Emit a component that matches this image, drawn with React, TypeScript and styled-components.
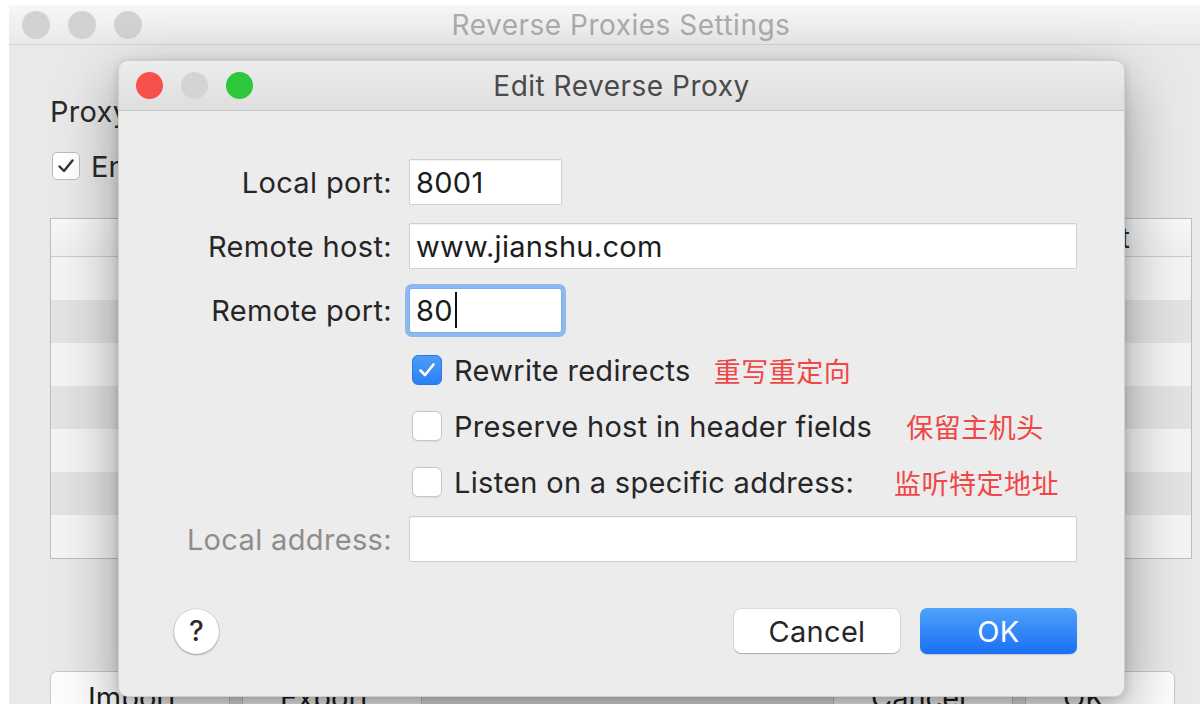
import React from "react";
import styled, { createGlobalStyle } from "styled-components";

const GlobalStyle = createGlobalStyle`
  html, body { margin: 0; padding: 0; width: 1200px; height: 704px; overflow: hidden; background: #fff; }
  body { font-family: Inter, "Noto Sans", "Liberation Sans", sans-serif; -webkit-font-smoothing: antialiased; }
  * { box-sizing: border-box; }
`;

const Screen = styled.div`
  position: relative;
  width: 1200px;
  height: 704px;
  overflow: hidden;
  background: #fff;
  padding: 5px 0 0 9px;
`;

const BackWindow = styled.div`
  width: 1224px;
  height: 760px;
  background: #e9e9e9;
  display: flex;
  flex-direction: column;
`;

const TitleBar = styled.div<{ $h: number; $pl: number; $dim?: boolean }>`
  flex: none;
  height: ${(p) => p.$h}px;
  display: grid;
  grid-template-columns: 1fr auto 1fr;
  align-items: center;
  padding: 0 ${(p) => p.$pl}px;
  background: ${(p) => (p.$dim ? "linear-gradient(#f6f6f6, #e9e9e9)" : "linear-gradient(#ededed, #dedede)")};
  border-bottom: 1px solid ${(p) => (p.$dim ? "#d4d4d4" : "#c8c8c8")};
`;

const Lights = styled.div`
  display: flex;
  gap: 18px;
`;

const Light = styled.span<{ $c: string; $size: number }>`
  width: ${(p) => p.$size}px;
  height: ${(p) => p.$size}px;
  border-radius: 50%;
  background: ${(p) => p.$c};
`;

const WinTitle = styled.div<{ $dim?: boolean }>`
  font-size: 28px;
  letter-spacing: 0.5px;
  color: ${(p) => (p.$dim ? "#ababab" : "#4a4a4a")};
  white-space: nowrap;
`;

const BackBody = styled.div`
  flex: 1;
  display: flex;
  flex-direction: column;
  padding: 50px 41px 0;
`;

const BackText = styled.div`
  font-size: 29px;
  letter-spacing: 0.3px;
  line-height: 34px;
  color: #2a2a2a;
  white-space: nowrap;
`;

const BackCheckRow = styled.div`
  margin-top: 20px;
  height: 34px;
  display: flex;
  align-items: center;
  gap: 11px;
  padding-left: 2px;
  font-size: 29px;
  color: #2a2a2a;
`;

const PlainBox = styled.span`
  width: 28px;
  height: 28px;
  border-radius: 5px;
  background: #fff;
  border: 1px solid #bcbcbc;
  display: flex;
  align-items: center;
  justify-content: center;
`;

const Table = styled.div`
  margin-top: 35px;
  border: 1px solid #bdbdbd;
  background: #f4f4f4;
  display: flex;
  flex-direction: column;
`;

const TableHead = styled.div`
  height: 38px;
  display: grid;
  grid-template-columns: 380px 1fr 200px;
  align-items: center;
  background: linear-gradient(#f8f8f8, #efefef);
  border-bottom: 1px solid #cbcbcb;
  font-size: 28px;
  color: #2a2a2a;
  padding: 0 24px 0 90px;
`;

const TableRow = styled.div<{ $odd: boolean }>`
  height: 43px;
  background: ${(p) => (p.$odd ? "#e3e3e3" : "#f4f4f4")};
`;

const BackButtons = styled.div`
  margin-top: 112px;
  display: flex;
  gap: 12px;
  padding-right: 17px;
`;

const BackButton = styled.div<{ $w: number }>`
  width: ${(p) => p.$w}px;
  height: 44px;
  background: #fdfdfd;
  border: 1px solid #c8c8c8;
  border-radius: 7px;
  font-size: 29px;
  color: #1e1e1e;
  padding: 8px 0 0 37px;
`;

const Spacer = styled.div`
  flex: 1;
`;

const Dialog = styled.div`
  position: absolute;
  left: 118px;
  top: 60px;
  width: 1007px;
  height: 637px;
  border-radius: 10px;
  overflow: hidden;
  background: #ececec;
  border: 1px solid rgba(0, 0, 0, 0.12);
  box-shadow: 0 22px 60px rgba(0, 0, 0, 0.36), 0 2px 10px rgba(0, 0, 0, 0.16);
  display: flex;
  flex-direction: column;
`;

const DialogBody = styled.div`
  flex: 1;
  display: flex;
  flex-direction: column;
  padding: 39px 47px 0 0;
`;

const FormGrid = styled.div`
  display: grid;
  grid-template-columns: 273px 1fr;
  grid-template-rows: 64px 64px 64px 56px 56px 56px 58px;
  column-gap: 17px;
  align-items: center;
`;

const Label = styled.div<{ $muted?: boolean }>`
  text-align: right;
  font-size: 29px;
  letter-spacing: 0.35px;
  color: ${(p) => (p.$muted ? "#8d8d8d" : "#262626")};
  white-space: nowrap;
`;

const Field = styled.div<{ $w?: number; $focus?: boolean }>`
  width: ${(p) => (p.$w ? `${p.$w}px` : "100%")};
  height: ${(p) => (p.$focus ? 45 : 46)}px;
  background: #fff;
  border: 1px solid ${(p) => (p.$focus ? "#79aef0" : "#d0d0d0")};
  border-radius: ${(p) => (p.$focus ? 3 : 1)}px;
  box-shadow: ${(p) => (p.$focus ? "0 0 0 4px rgba(110, 168, 238, 0.75)" : "inset 0 1px 0 rgba(0,0,0,0.05)")};
  display: flex;
  align-items: center;
  padding-left: 6px;
  font-size: 29px;
  letter-spacing: 0.3px;
  color: #1c1c1c;
`;

const Caret = styled.span`
  width: 2px;
  height: 36px;
  background: #111;
  margin-left: 2px;
`;

const CheckRow = styled.div`
  grid-column: 2;
  display: flex;
  align-items: center;
  padding-left: 3px;
  font-size: 29px;
  letter-spacing: 0.3px;
  color: #262626;
  white-space: nowrap;
`;

const Box = styled.span<{ $on?: boolean }>`
  flex: none;
  width: 30px;
  height: 30px;
  border-radius: 6px;
  display: flex;
  align-items: center;
  justify-content: center;
  background: ${(p) => (p.$on ? "linear-gradient(#4d9cfa, #2a7ff4)" : "#fff")};
  border: 1px solid ${(p) => (p.$on ? "#2a78e6" : "#c6c6c6")};
  box-shadow: ${(p) => (p.$on ? "none" : "0 1px 1px rgba(0,0,0,0.06)")};
`;

const CheckText = styled.span`
  margin-left: 12px;
`;

const Note = styled.span<{ $gap: number }>`
  margin-left: ${(p) => p.$gap}px;
  font-family: "Noto Sans CJK SC", "Noto Sans CJK JP", sans-serif;
  font-size: 27px;
  letter-spacing: 0.5px;
  color: #ef4646;
`;

const Footer = styled.div`
  margin-top: 40px;
  display: flex;
  align-items: center;
  gap: 20px;
  padding-left: 55px;
`;

const HelpButton = styled.div`
  width: 45px;
  height: 45px;
  border-radius: 50%;
  background: #fff;
  box-shadow: 0 1px 2px rgba(0, 0, 0, 0.3), 0 0 0 0.5px rgba(0, 0, 0, 0.15);
  display: flex;
  align-items: center;
  justify-content: center;
  font-size: 28px;
  font-weight: 500;
  color: #2b2b2b;
`;

const Button = styled.div<{ $primary?: boolean; $w: number }>`
  width: ${(p) => p.$w}px;
  height: ${(p) => (p.$primary ? 46 : 44)}px;
  border-radius: 7px;
  display: flex;
  align-items: center;
  justify-content: center;
  font-size: 29px;
  letter-spacing: 0.3px;
  color: ${(p) => (p.$primary ? "#fff" : "#262626")};
  background: ${(p) => (p.$primary ? "linear-gradient(#4fa2fb, #1a6ff4)" : "#fff")};
  box-shadow: ${(p) =>
    p.$primary ? "0 1px 1px rgba(0,0,0,0.15)" : "0 1px 1px rgba(0,0,0,0.2), 0 0 0 0.5px rgba(0,0,0,0.15)"};
`;

const Tick = ({ color, w }: { color: string; w: number }) => (
  <svg width="22" height="22" viewBox="0 0 22 22" fill="none">
    <path d="M4.5 11.5 L9 16 L17.5 5.5" stroke={color} strokeWidth={w} strokeLinecap="round" strokeLinejoin="round" />
  </svg>
);

export default function App() {
  const rows = Array.from({ length: 7 }, (_, i) => i);
  return (
    <Screen>
      <GlobalStyle />
      <BackWindow>
        <TitleBar $h={40} $pl={13} $dim>
          <Lights>
            <Light $c="#d2d2d2" $size={28} />
            <Light $c="#d2d2d2" $size={28} />
            <Light $c="#d2d2d2" $size={28} />
          </Lights>
          <WinTitle $dim>Reverse Proxies Settings</WinTitle>
          <span />
        </TitleBar>
        <BackBody>
          <BackText>Proxy requests from local ports to remote hosts.</BackText>
          <BackCheckRow>
            <PlainBox>
              <Tick color="#333" w={2.4} />
            </PlainBox>
            <span>Enable Reverse Proxies</span>
          </BackCheckRow>
          <Table>
            <TableHead>
              <span>Local Port</span>
              <span>Remote Host</span>
              <span>Remote Port</span>
            </TableHead>
            {rows.map((r) => (
              <TableRow key={r} $odd={r % 2 === 1} />
            ))}
          </Table>
          <BackButtons>
            <BackButton $w={180}>Import</BackButton>
            <BackButton $w={180}>Export</BackButton>
            <Spacer />
            <BackButton $w={180}>Cancel</BackButton>
            <BackButton $w={150}>OK</BackButton>
          </BackButtons>
        </BackBody>
      </BackWindow>

      <Dialog>
        <TitleBar $h={50} $pl={17}>
          <Lights>
            <Light $c="#f5504c" $size={27} />
            <Light $c="#d4d4d4" $size={27} />
            <Light $c="#2ec63a" $size={27} />
          </Lights>
          <WinTitle>Edit Reverse Proxy</WinTitle>
          <span />
        </TitleBar>
        <DialogBody>
          <FormGrid>
            <Label>Local port:</Label>
            <Field $w={153}>8001</Field>
            <Label>Remote host:</Label>
            <Field>www.jianshu.com</Field>
            <Label>Remote port:</Label>
            <Field $w={153} $focus>
              80
              <Caret />
            </Field>
            <CheckRow>
              <Box $on>
                <Tick color="#fff" w={2.6} />
              </Box>
              <CheckText>Rewrite redirects</CheckText>
              <Note $gap={23}>重写重定向</Note>
            </CheckRow>
            <CheckRow>
              <Box />
              <CheckText>Preserve host in header fields</CheckText>
              <Note $gap={34}>保留主机头</Note>
            </CheckRow>
            <CheckRow>
              <Box />
              <CheckText>Listen on a specific address:</CheckText>
              <Note $gap={40}>监听特定地址</Note>
            </CheckRow>
            <Label $muted>Local address:</Label>
            <Field />
          </FormGrid>
          <Footer>
            <HelpButton>?</HelpButton>
            <Spacer />
            <Button $w={166}>Cancel</Button>
            <Button $w={157} $primary>
              OK
            </Button>
          </Footer>
        </DialogBody>
      </Dialog>
    </Screen>
  );
}
